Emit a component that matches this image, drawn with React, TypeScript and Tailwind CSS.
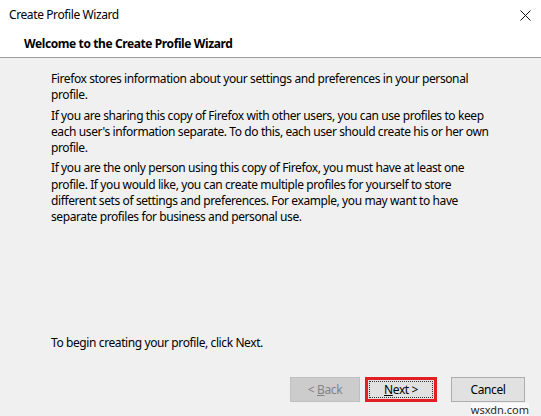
export default function App() {
  return (
    <div
      className="relative w-[541px] h-[416px] bg-[#f0f0f0] flex flex-col text-[12px] tracking-[-0.4px] text-black overflow-hidden"
      style={{ fontFamily: '"Noto Sans", "Open Sans", sans-serif' }}
    >
      {/* title bar */}
      <div className="h-[30px] bg-white flex items-center justify-between pl-[9px] pr-[10px]">
        <span>Create Profile Wizard</span>
        <svg width="11" height="11" viewBox="0 0 11 11">
          <path d="M0.5 0.5 L10.5 10.5 M10.5 0.5 L0.5 10.5" stroke="#111" strokeWidth="1" />
        </svg>
      </div>

      {/* page header */}
      <div className="h-[28px] bg-white border-b border-[#a0a0a0] pl-[24px] flex items-center font-bold">
        Welcome to the Create Profile Wizard
      </div>

      {/* body */}
      <div className="flex-1 flex flex-col pl-[51px] pt-[13px] w-[494px] leading-[16.3px]">
        <p>Firefox stores information about your settings and preferences in your personal profile.</p>
        <p className="mt-[4px]">
          If you are sharing this copy of Firefox with other users, you can use profiles to keep each user's
          information separate. To do this, each user should create his or her own profile.
        </p>
        <p className="mt-[4px]">
          If you are the only person using this copy of Firefox, you must have at least one profile. If you
          would like, you can create multiple profiles for yourself to store different sets of settings and
          preferences. For example, you may want to have separate profiles for business and personal use.
        </p>
        <p className="mt-auto mb-[26px]">To begin creating your profile, click Next.</p>
      </div>

      {/* buttons */}
      <div className="h-[39px] flex justify-end items-start pr-[16px]">
        <button
          disabled
          className="w-[70px] h-[25px] bg-[#cccccc] border border-[#bfbfbf] text-[#838383]"
        >
          &lt; <span className="underline">B</span>ack
        </button>
        <div className="ml-[5px] w-[72px] h-[25px] border-[3px] border-[#e01f26] bg-[#e1e1e1] p-[1px]">
          <button className="w-full h-full border border-dotted border-[#333] flex items-center justify-center">
            <span className="underline">N</span>ext &gt;
          </button>
        </div>
        <button className="ml-[14px] w-[74px] h-[25px] bg-[#e1e1e1] border border-[#adadad]">Cancel</button>
      </div>

      <span className="absolute right-[12px] bottom-[0px] text-[11px] tracking-normal leading-[13px] text-[#2a2a2a] bg-white/60">
        wsxdn.com
      </span>
    </div>
  );
}
